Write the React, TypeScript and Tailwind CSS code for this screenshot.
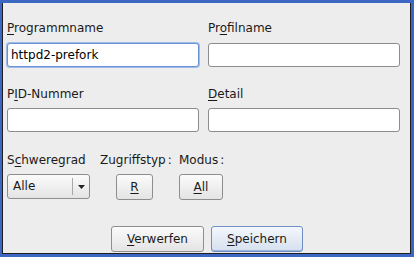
import React from 'react';

const font = { fontFamily: '"DejaVu Sans", "Liberation Sans", sans-serif' };

function Label({ pre, u, post }: { pre: string; u: string; post: string }) {
  return (
    <div className="h-[16px] text-[12px] leading-[16px] text-[#1a1a1a]">
      {pre}<span className="underline underline-offset-2">{u}</span>{post}
    </div>
  );
}

function Field({ value = '', focused = false }: { value?: string; focused?: boolean }) {
  return (
    <div
      className={`h-[24px] w-[192px] rounded-[3px] bg-white px-[3px] text-[12px] leading-[22px] text-black border ${
        focused ? 'border-[#6a93d6] shadow-[0_0_0_1px_#9fbbe8]' : 'border-[#8c8c8c]'
      }`}
    >
      {value}
    </div>
  );
}

function Btn({ children, w, active = false }: { children: React.ReactNode; w: string; active?: boolean }) {
  return (
    <div
      className={`${w} h-[26px] flex items-center justify-center rounded-[3px] border text-[12px] text-[#1a1a1a] ${
        active
          ? 'border-[#6f8fc4] bg-gradient-to-b from-[#f4f7fc] to-[#d6e0ef] shadow-[inset_0_-1px_0_#9bb4dc]'
          : 'border-[#8e8e8e] bg-gradient-to-b from-[#fbfbfb] to-[#e4e4e4]'
      }`}
    >
      {children}
    </div>
  );
}

export default function App() {
  return (
    <div className="w-[414px] h-[257px] bg-[#3c68c4] pt-[3px] pl-[2px] pr-[3px] pb-[3px]" style={font}>
      <div className="h-full w-full bg-[#ededed] border-l border-r border-b border-[#1e1e1e] pl-[4px] pt-[17px]">
        <div className="flex gap-[9px]">
          <div>
            <Label pre="" u="P" post="rogrammname" />
            <div className="mt-[7px]"><Field value="httpd2-prefork" focused /></div>
          </div>
          <div>
            <Label pre="Pr" u="o" post="filname" />
            <div className="mt-[7px]"><Field /></div>
          </div>
        </div>

        <div className="flex gap-[9px] mt-[19px]">
          <div>
            <Label pre="P" u="I" post="D-Nummer" />
            <div className="mt-[6px]"><Field /></div>
          </div>
          <div>
            <Label pre="" u="D" post="etail" />
            <div className="mt-[6px]"><Field /></div>
          </div>
        </div>

        <div className="flex mt-[20px]">
          <div className="w-[93px]">
            <Label pre="S" u="c" post="hweregrad" />
            <div className="mt-[6px] w-[83px] h-[25px] flex rounded-[3px] border border-[#8e8e8e] bg-gradient-to-b from-[#fbfbfb] to-[#e4e4e4] text-[12px] text-[#1a1a1a]">
              <div className="flex-1 pl-[5px] leading-[23px]">Alle</div>
              <div className="w-px my-[3px] bg-[#a8a8a8]" />
              <div className="w-[16px] flex items-center justify-center">
                <svg width="7" height="4" viewBox="0 0 7 4"><path d="M0 0h7L3.5 4z" fill="#222" /></svg>
              </div>
            </div>
          </div>
          <div className="w-[79px]">
            <div className="h-[16px] text-[12px] leading-[16px] text-[#1a1a1a]">
              Zugriffstyp<span className="ml-[2px]">:</span>
            </div>
            <div className="mt-[6px] ml-[16px]">
              <Btn w="w-[37px]"><span className="underline underline-offset-2">R</span></Btn>
            </div>
          </div>
          <div>
            <div className="h-[16px] text-[12px] leading-[16px] text-[#1a1a1a]">
              Modus<span className="ml-[2px]">:</span>
            </div>
            <div className="mt-[6px]">
              <Btn w="w-[44px]"><span><span className="underline underline-offset-2">A</span>ll</span></Btn>
            </div>
          </div>
        </div>

        <div className="flex gap-[7px] mt-[26px] pl-[104px]">
          <Btn w="w-[93px]"><span><span className="underline underline-offset-2">V</span>erwerfen</span></Btn>
          <Btn w="w-[92px]" active><span><span className="underline underline-offset-2">S</span>peichern</span></Btn>
        </div>
      </div>
    </div>
  );
}
